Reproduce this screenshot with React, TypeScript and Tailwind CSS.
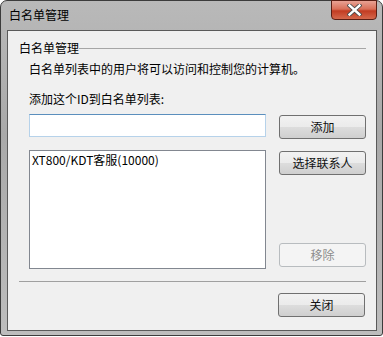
import React from "react";

const font = { fontFamily: '"Noto Sans CJK SC", "Noto Sans", sans-serif' };

function Btn({ label, disabled, className = "" }: { label: string; disabled?: boolean; className?: string }) {
  return (
    <div
      className={
        "w-[87px] h-[24px] rounded-[3px] border flex items-center justify-center text-[12px] leading-none " +
        (disabled
          ? "border-[#b8bcbf] bg-[#f4f4f4] text-[#8d8d8d] "
          : "border-[#707070] bg-[linear-gradient(to_bottom,#f2f2f2_0%,#ebebeb_50%,#dddddd_50%,#cfcfcf_100%)] text-[#111] ") +
        className
      }
    >
      {label}
    </div>
  );
}

export default function App() {
  return (
    <div className="w-[383px] h-[337px] bg-white overflow-hidden" style={font}>
      <div className="w-[383px] h-[336px] rounded-t-[7px] rounded-b-[3px] border border-[#3c3c3c] bg-[linear-gradient(to_bottom,#b9b9b9,#a9a9a9_40%,#b3b3b3_70%,#bdbdbd)] flex flex-col pl-[6px] pr-[5px] pb-[4px]">
        <div className="h-[29px] flex items-start justify-between shrink-0">
          <div className="pl-[2px] pt-[6px] text-[12px] leading-[16px] text-black">白名单管理</div>
          <div className="w-[46px] h-[20px] -mt-[1px] rounded-b-[4px] border border-[#5a1e14] bg-[linear-gradient(to_bottom,#e8a294_0%,#d96f58_45%,#c23c22_55%,#d5684c_100%)] flex items-center justify-center">
            <svg width="15" height="12" viewBox="0 0 15 12">
              <path d="M2.5 1.5 L12.5 10.5 M12.5 1.5 L2.5 10.5" stroke="#4a4a4a" strokeWidth="4.2" strokeLinecap="square" />
              <path d="M2.5 1.5 L12.5 10.5 M12.5 1.5 L2.5 10.5" stroke="#ffffff" strokeWidth="2.4" strokeLinecap="square" />
            </svg>
          </div>
        </div>
        <div className="flex-1 border border-[#5a5a5a] bg-[#f0f0f0] flex flex-col pl-[11px] pr-[10px] text-[12px] text-black">
          <div className="mt-[9px] flex items-center h-[16px]">
            <span className="leading-[16px]">白名单管理</span>
            <div className="flex-1 h-[1px] bg-[#a6a6a6] mt-[1px]" />
          </div>
          <div className="ml-[10px] mt-[5px] leading-[16px]">白名单列表中的用户将可以访问和控制您的计算机。</div>
          <div className="ml-[10px] mt-[14px] leading-[16px]">添加这个ID到白名单列表:</div>
          <div className="ml-[10px] mt-[7px] flex items-start gap-[13px]">
            <div className="w-[237px] h-[23px] bg-white border border-[#b6d2ea] border-t-[#5b8fbd]" />
            <Btn label="添加" className="mt-[1px]" />
          </div>
          <div className="ml-[10px] mt-[11px] flex items-start gap-[13px]">
            <div className="w-[237px] h-[119px] bg-white border border-[#828790] px-[2px] pt-[1px] leading-[16px]">
              XT800/KDT客服(10000)
            </div>
            <div className="flex flex-col justify-between h-[116px] mt-[1px]">
              <Btn label="选择联系人" />
              <Btn label="移除" disabled />
            </div>
          </div>
          <div className="mt-[12px] h-[1px] bg-[#a0a0a0]" />
          <div className="mt-[11px] flex justify-end">
            <Btn label="关闭" className="mr-[1px]" />
          </div>
        </div>
      </div>
    </div>
  );
}
